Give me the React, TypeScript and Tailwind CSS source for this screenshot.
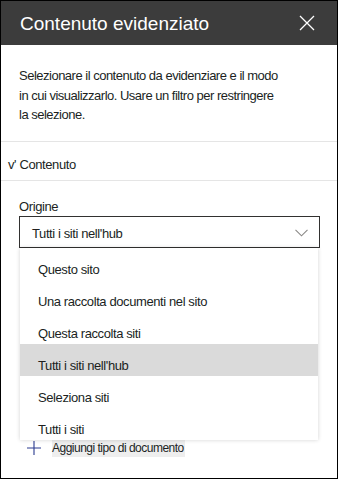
import React from 'react';

const options = [
  'Questo sito',
  'Una raccolta documenti nel sito',
  'Questa raccolta siti',
  "Tutti i siti nell'hub",
  'Seleziona siti',
  'Tutti i siti',
];

export default function App() {
  const selected = "Tutti i siti nell'hub";

  return (
    <div
      className="w-[338px] h-[479px] border border-black bg-white overflow-hidden text-[#201f1e]"
      style={{ fontFamily: '"Liberation Sans", Arial, sans-serif' }}
    >
      {/* header */}
      <div className="h-[44px] bg-[#3c3c3c] flex items-center justify-between pl-[19px] pr-[22px]">
        <h1 className="text-[19px] text-white leading-none">Contenuto evidenziato</h1>
        <button className="text-white">
          <svg width="16" height="16" viewBox="0 0 16 16" fill="none" stroke="currentColor" strokeWidth="1.3">
            <path d="M1 1L15 15M15 1L1 15" />
          </svg>
        </button>
      </div>

      <p className="px-[18px] pt-[21px] pb-[16px] text-[13px] tracking-[-0.5px] leading-[19.5px] w-[300px]">
        Selezionare il contenuto da evidenziare e il modo in cui visualizzarlo. Usare un filtro per restringere la selezione.
      </p>

      <div className="border-t border-b border-[#e5e5e5] h-[40px] flex items-center pl-[7px] pt-[8px] text-[13px] tracking-[-0.4px]">
        v' Contenuto
      </div>

      <div className="px-[18px] pt-[16px]">
        <label className="block text-[13px] tracking-[-0.4px] leading-[19px]">Origine</label>
        <div className="relative">
          <div className="h-[32px] w-[301px] border border-[#323130] flex items-center justify-between pl-[12px] pr-[11px] text-[13px] tracking-[-0.4px] pt-[5px]">
            <span>{selected}</span>
            <svg width="13" height="8" viewBox="0 0 13 8" fill="none" stroke="#8a8886" strokeWidth="1.1" className="-mt-[2px]">
              <path d="M0.5 0.8L6.5 6.8L12.5 0.8" />
            </svg>
          </div>

          {/* options menu */}
          <ul className="absolute left-[1px] top-[32px] w-[298px] bg-white shadow-[0_0_4px_rgba(0,0,0,0.18)] z-10">
            {options.map((o) => (
              <li
                key={o}
                className={`h-[32px] block pl-[18px] pt-[14px] leading-[16px] text-[13px] tracking-[-0.4px] ${o === selected ? 'bg-[#dadada]' : ''}`}
              >
                {o}
              </li>
            ))}
          </ul>

          <div className="mt-[191px] flex items-center h-[18px]">
            <svg width="14" height="14" viewBox="0 0 14 14" fill="none" stroke="#2b3b8f" strokeWidth="1.1" className="ml-[8px]">
              <path d="M7 0V14M0 7H14" />
            </svg>
            <span className="ml-[11px] bg-[#eeeeee] text-[12px] tracking-[-0.5px] leading-[18px] pr-[1px]">Aggiungi tipo di documento</span>
          </div>
        </div>
      </div>
    </div>
  );
}
